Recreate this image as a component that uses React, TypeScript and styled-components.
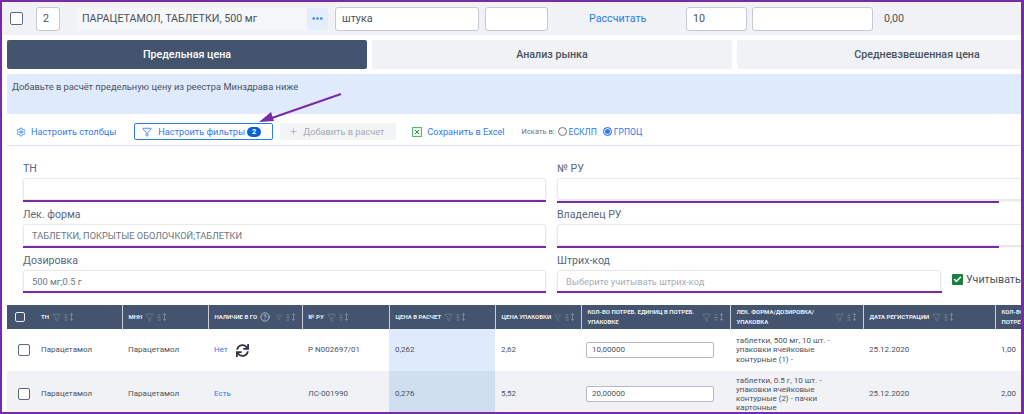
import React from "react";
import styled, { createGlobalStyle } from "styled-components";
import { Check, CircleHelp, Ellipsis, Funnel, Plus, Settings } from "lucide-react";
import { FaSync } from "react-icons/fa";

const purple = "#7b2aa5";
const slate = "#44546e";
const blue = "#2f7cf0";
const text = "#4a5261";

const GlobalStyle = createGlobalStyle`
  html, body {
    margin: 0;
    padding: 0;
    background: #fff;
    overflow: hidden;
  }
  * {
    box-sizing: border-box;
  }
`;

const Frame = styled.div`
  position: relative;
  width: 1024px;
  height: 414px;
  overflow: hidden;
  border: 2px solid ${purple};
  border-right-width: 3px;
  background: #fff;
  font-family: Roboto, "Liberation Sans", sans-serif;
  color: ${text};
`;

const TopRow = styled.div`
  display: flex;
  align-items: center;
  height: 33px;
  padding-left: 8px;
  background: #f0f2f5;
  font-size: 10.7px;
`;

const CheckBox = styled.span<{ $size?: number; $light?: boolean }>`
  display: block;
  flex: none;
  width: ${(p) => p.$size ?? 12}px;
  height: ${(p) => p.$size ?? 12}px;
  border: 1.5px solid ${(p) => (p.$light ? "#e8ebf0" : "#5d6b82")};
  border-radius: 2px;
  background: ${(p) => (p.$light ? "transparent" : "#fff")};
`;

const TopInput = styled.div<{ $width: number; $left: number }>`
  flex: none;
  width: ${(p) => p.$width}px;
  height: 24px;
  margin-left: ${(p) => p.$left}px;
  padding: 0 6px;
  border: 1px solid #c5cad3;
  border-radius: 3px;
  background: #fff;
  line-height: 22px;
`;

const NameField = styled.div`
  flex: none;
  width: 230px;
  height: 22px;
  margin-left: 17px;
  padding-left: 5px;
  background: #f5f6f8;
  line-height: 22px;
`;

const DotsButton = styled.div`
  display: flex;
  align-items: center;
  justify-content: center;
  flex: none;
  width: 21px;
  height: 22px;
  background: #e3edfb;
  color: ${blue};
`;

const CalcLink = styled.span`
  flex: none;
  margin-left: 41px;
  width: 97px;
  color: ${blue};
`;

const Total = styled.span`
  margin-left: 11px;
`;

const Tabs = styled.div`
  display: flex;
  gap: 5px;
  padding: 5px 0 0 5px;
`;

const Tab = styled.div<{ $active?: boolean }>`
  flex: none;
  width: 360px;
  height: 29px;
  border-radius: 2px;
  background: ${(p) => (p.$active ? slate : "#f0f2f5")};
  color: ${(p) => (p.$active ? "#fff" : text)};
  font-size: 10.7px;
  font-weight: 500;
  line-height: 29px;
  text-align: center;
`;

const Info = styled.div`
  height: 40px;
  margin: 5px 0 0 5px;
  padding: 7px 5px;
  border-radius: 2px 0 0 2px;
  background: #dfeafc;
  font-size: 9.3px;
  line-height: 12px;
`;

const Toolbar = styled.div`
  display: flex;
  align-items: center;
  height: 32px;
  margin-left: 5px;
  padding: 4px 0 0 9px;
  border-bottom: 1px solid #e3e1ef;
  color: ${blue};
  font-size: 9.2px;
`;

const ToolLink = styled.span<{ $left?: number }>`
  display: flex;
  align-items: center;
  flex: none;
  gap: 5px;
  margin-left: ${(p) => p.$left ?? 0}px;
`;

const FilterButton = styled.span`
  display: flex;
  align-items: center;
  flex: none;
  gap: 6px;
  width: 139px;
  height: 17px;
  margin-left: 18px;
  padding-left: 7px;
  border: 1px solid ${blue};
  border-radius: 2px;
`;

const Badge = styled.span`
  display: block;
  width: 14px;
  height: 10px;
  margin-left: -4px;
  border-radius: 5px;
  background: #0b5fd6;
  color: #fff;
  font-size: 7.5px;
  font-weight: 700;
  line-height: 10px;
  text-align: center;
`;

const DisabledButton = styled.span`
  display: flex;
  align-items: center;
  flex: none;
  gap: 5px;
  width: 116px;
  height: 17px;
  margin-left: 7px;
  padding-left: 9px;
  border-radius: 2px;
  background: #f3f4f6;
  color: #a5abb5;
`;

const SearchLabel = styled.span`
  margin-left: 17px;
  color: #6b7280;
  font-size: 7.5px;
`;

const Radio = styled.span<{ $on?: boolean }>`
  display: block;
  flex: none;
  width: 9px;
  height: 9px;
  margin: 0 2px 0 3px;
  border: 1px solid ${(p) => (p.$on ? blue : "#777")};
  border-radius: 50%;
  background: ${(p) => (p.$on ? blue : "#fff")};
  box-shadow: ${(p) => (p.$on ? "inset 0 0 0 1px #fff" : "none")};
`;

const RadioText = styled.span`
  margin-right: 3px;
  font-size: 8.6px;
`;

const Filters = styled.div`
  display: grid;
  grid-template-columns: 523px 500px;
  column-gap: 11px;
  margin-left: 21px;
  padding-top: 16px;
`;

const Field = styled.div`
  position: relative;
  height: 46px;
`;

const FieldLabel = styled.div`
  height: 16px;
  color: #5a6780;
  font-size: 10.6px;
  line-height: 14px;
`;

const FieldBody = styled.div`
  display: flex;
  align-items: center;
`;

const FieldInput = styled.div<{ $width?: number; $hint?: boolean }>`
  flex: none;
  width: ${(p) => p.$width ?? 500}px;
  height: 22px;
  padding: 0 8px;
  border: 1px solid #e8e9ec;
  border-radius: 3px;
  box-shadow: 0 1px 2px rgba(60, 70, 90, 0.15);
  color: ${(p) => (p.$hint ? "#a9aeb6" : "#6e7480")};
  font-size: 9.25px;
  line-height: 22px;
`;

const Underline = styled.span<{ $width: number; $bottom: number }>`
  position: absolute;
  left: 0;
  bottom: ${(p) => p.$bottom}px;
  width: ${(p) => p.$width}px;
  height: 2px;
  background: ${purple};
`;

const KeepCheck = styled.span`
  display: flex;
  align-items: center;
  justify-content: center;
  flex: none;
  width: 11px;
  height: 11px;
  margin: -3px 3px 0 11px;
  border-radius: 1px;
  background: #17803d;
  color: #fff;
`;

const KeepLabel = styled.span`
  margin-top: -3px;
  font-size: 10.7px;
`;

const TableWrap = styled.div`
  margin: 5px 0 0 5px;
`;

const Table = styled.table`
  width: 1130px;
  border-collapse: collapse;
  table-layout: fixed;
`;

const Th = styled.th<{ $width: number }>`
  width: ${(p) => p.$width}px;
  height: 24px;
  padding: 0 6px;
  border-left: 1px solid #c9cfd9;
  background: ${slate};
  color: #e9edf3;
  font-size: 6px;
  font-weight: 700;
  line-height: 10px;
  text-align: left;
  text-transform: uppercase;
  white-space: nowrap;
  &:first-child {
    border-left: none;
  }
`;

const HeadInner = styled.div`
  display: flex;
  align-items: center;
  gap: 3px;
`;

const HeadWrapLabel = styled.span`
  flex: 1;
`;

const Td = styled.td`
  padding: 4.5px 6px;
  font-size: 8px;
  line-height: 9.3px;
`;

const Row = styled.tr<{ $alt?: boolean }>`
  height: 42px;
  background: ${(p) => (p.$alt ? "#f0f2f5" : "#fff")};
`;

const PriceCell = styled(Td)<{ $alt?: boolean }>`
  background: ${(p) => (p.$alt ? "#d0dff0" : "#dfeafc")};
`;

const FirstCell = styled.div`
  display: flex;
  align-items: center;
  gap: 11px;
  padding-left: 5px;
`;

const HeadFirst = styled.div`
  display: flex;
  align-items: center;
  gap: 3px;
  padding-left: 2px;
`;

const HeadCheckSpacer = styled.span`
  width: 10px;
  flex: none;
`;

const Availability = styled.span`
  display: flex;
  align-items: center;
  gap: 8px;
  color: ${blue};
`;

const QtyInput = styled.div`
  width: 128px;
  height: 16px;
  margin-left: -1px;
  padding: 0 5px;
  border: 1px solid #b4bbc7;
  border-radius: 2px;
  background: #fff;
  line-height: 14px;
`;

const HelpIcon = styled(CircleHelp)`
  flex: none;
  margin-right: 3px;
`;

const Arrow = styled.svg`
  position: absolute;
  left: 248px;
  top: 84px;
`;

const SortSvg = styled.svg`
  flex: none;
`;

const SortIcon = () => (
  <SortSvg width="10" height="8" viewBox="0 0 10 8" fill="none" stroke="#8493a8" strokeWidth="0.8">
    <path d="M0.5 2h3M0.5 4.5h3M0.5 7h3M7.5 0.5v7M6 2l1.5-1.5L9 2M6 6l1.5 1.5L9 6" />
  </SortSvg>
);

const HeadIcons = () => (
  <>
    <Funnel size={9} color="#8f9cb0" strokeWidth={1.2} />
    <SortIcon />
  </>
);

const ExcelIcon = () => (
  <svg width="10" height="10" viewBox="0 0 10 10" fill="none">
    <rect x="0.5" y="0.5" width="9" height="9" stroke="#5ab56e" fill="#e7f5ea" />
    <path d="M3 3l4 4M7 3l-4 4" stroke="#2f8f4b" strokeWidth="1" />
  </svg>
);

const rows = [
  {
    availability: "Нет",
    sync: true,
    ru: "Р N002697/01",
    price: "0,262",
    pack: "2,62",
    qty: "10,00000",
    form: "таблетки, 500 мг, 10 шт. - упаковки ячейковые контурные (1) -",
    needed: "1,00",
  },
  {
    availability: "Есть",
    sync: false,
    ru: "ЛС-001990",
    price: "0,276",
    pack: "5,52",
    qty: "20,00000",
    form: "таблетки, 0.5 г, 10 шт. - упаковки ячейковые контурные (2) - пачки картонные",
    needed: "2,00",
  },
];

export default function App() {
  return (
    <Frame>
      <GlobalStyle />
      <TopRow>
        <CheckBox $size={13} />
        <TopInput $width={24} $left={13}>2</TopInput>
        <NameField>ПАРАЦЕТАМОЛ, ТАБЛЕТКИ, 500 мг</NameField>
        <DotsButton><Ellipsis size={13} strokeWidth={3} /></DotsButton>
        <TopInput $width={144} $left={7}>штука</TopInput>
        <TopInput $width={63} $left={6} />
        <CalcLink>Рассчитать</CalcLink>
        <TopInput $width={61} $left={0}>10</TopInput>
        <TopInput $width={121} $left={5} />
        <Total>0,00</Total>
      </TopRow>

      <Tabs>
        <Tab $active>Предельная цена</Tab>
        <Tab>Анализ рынка</Tab>
        <Tab>Средневзвешенная цена</Tab>
      </Tabs>

      <Info>Добавьте в расчёт предельную цену из реестра Минздрава ниже</Info>

      <Toolbar>
        <ToolLink><Settings size={10} />Настроить столбцы</ToolLink>
        <FilterButton>
          <Funnel size={10} />
          Настроить фильтры
          <Badge>2</Badge>
        </FilterButton>
        <DisabledButton><Plus size={9} />Добавить в расчет</DisabledButton>
        <ToolLink $left={16}><ExcelIcon />Сохранить в Excel</ToolLink>
        <SearchLabel>Искать в:</SearchLabel>
        <Radio />
        <RadioText>ЕСКЛП</RadioText>
        <Radio $on />
        <RadioText>ГРПОЦ</RadioText>
      </Toolbar>

      <Filters>
        <Field>
          <FieldLabel>ТН</FieldLabel>
          <FieldInput $width={523} />
          <Underline $width={523} $bottom={6} />
        </Field>
        <Field>
          <FieldLabel>№ РУ</FieldLabel>
          <FieldInput />
          <Underline $width={442} $bottom={5} />
        </Field>
        <Field>
          <FieldLabel>Лек. форма</FieldLabel>
          <FieldInput $width={523}>ТАБЛЕТКИ, ПОКРЫТЫЕ ОБОЛОЧКОЙ;ТАБЛЕТКИ</FieldInput>
          <Underline $width={523} $bottom={6} />
        </Field>
        <Field>
          <FieldLabel>Владелец РУ</FieldLabel>
          <FieldInput />
          <Underline $width={442} $bottom={6} />
        </Field>
        <Field>
          <FieldLabel>Дозировка</FieldLabel>
          <FieldInput $width={523}>500 мг;0.5 г</FieldInput>
          <Underline $width={523} $bottom={7} />
        </Field>
        <Field>
          <FieldLabel>Штрих-код</FieldLabel>
          <FieldBody>
            <FieldInput $width={384} $hint>Выберите учитывать штрих-код</FieldInput>
            <KeepCheck><Check size={9} strokeWidth={4} /></KeepCheck>
            <KeepLabel>Учитывать</KeepLabel>
          </FieldBody>
          <Underline $width={385} $bottom={7} />
        </Field>
      </Filters>

      <TableWrap>
        <Table>
          <thead>
            <tr>
              <Th $width={115}>
                <HeadFirst>
                  <CheckBox $size={10} $light />
                  <HeadCheckSpacer />
                  ТН <HeadIcons />
                </HeadFirst>
              </Th>
              <Th $width={86}><HeadInner>МНН <HeadIcons /></HeadInner></Th>
              <Th $width={94}>
                <HeadInner>
                  Наличие в ГО <HelpIcon size={10} strokeWidth={1.5} /> <HeadIcons />
                </HeadInner>
              </Th>
              <Th $width={87}><HeadInner>№ РУ <HeadIcons /></HeadInner></Th>
              <Th $width={106}><HeadInner>Цена в расчет <HeadIcons /></HeadInner></Th>
              <Th $width={86}><HeadInner>Цена упаковки <HeadIcons /></HeadInner></Th>
              <Th $width={149}>
                <HeadInner>
                  <HeadWrapLabel>Кол-во потреб. единиц в потреб.<br />упаковке</HeadWrapLabel>
                  <HeadIcons />
                </HeadInner>
              </Th>
              <Th $width={133}>
                <HeadInner>
                  <HeadWrapLabel>Лек. форма/дозировка/<br />упаковка</HeadWrapLabel>
                  <HeadIcons />
                </HeadInner>
              </Th>
              <Th $width={132}><HeadInner>Дата регистрации <HeadIcons /></HeadInner></Th>
              <Th $width={142}>Кол-во единиц<br />потреб. упаковок</Th>
            </tr>
          </thead>
          <tbody>
            {rows.map((row, i) => (
              <Row key={row.ru} $alt={i % 2 === 1}>
                <Td>
                  <FirstCell>
                    <CheckBox />
                    Парацетамол
                  </FirstCell>
                </Td>
                <Td>Парацетамол</Td>
                <Td>
                  <Availability>
                    {row.availability}
                    {row.sync && <FaSync size={13} color="#2f3642" />}
                  </Availability>
                </Td>
                <Td>{row.ru}</Td>
                <PriceCell $alt={i % 2 === 1}>{row.price}</PriceCell>
                <Td>{row.pack}</Td>
                <Td><QtyInput>{row.qty}</QtyInput></Td>
                <Td>{row.form}</Td>
                <Td>25.12.2020</Td>
                <Td>{row.needed}</Td>
              </Row>
            ))}
          </tbody>
        </Table>
      </TableWrap>

      <Arrow width="100" height="40" viewBox="0 0 100 40" fill="none">
        <path d="M91 8L16 34" stroke={purple} strokeWidth="2" />
        <path d="M9 36L21 26L24 35Z" fill={purple} />
      </Arrow>
    </Frame>
  );
}
